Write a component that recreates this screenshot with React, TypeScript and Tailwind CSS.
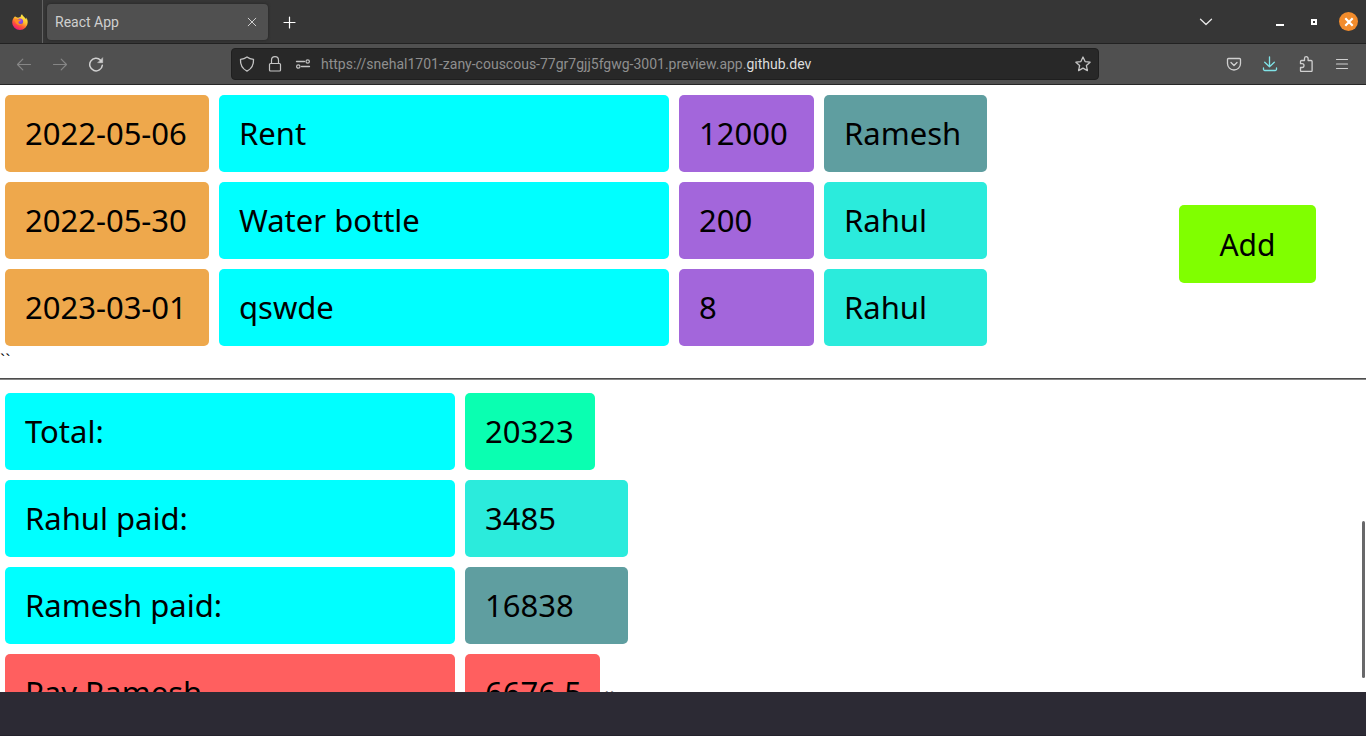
import type { ReactNode } from "react";

type Expense = { date: string; item: string; amount: string; payer: "Ramesh" | "Rahul" };

const expenses: Expense[] = [
  { date: "2022-05-06", item: "Rent", amount: "12000", payer: "Ramesh" },
  { date: "2022-05-30", item: "Water bottle", amount: "200", payer: "Rahul" },
  { date: "2023-03-01", item: "qswde", amount: "8", payer: "Rahul" },
];

const payerColor = { Ramesh: "bg-[#5f9ea0]", Rahul: "bg-[#2bebdc]" };

const summary = [
  { label: "Total:", value: "20323", labelStyle: "bg-[#00ffff]", valueStyle: "w-[130px] bg-[#0affb1]", note: "" },
  { label: "Rahul paid:", value: "3485", labelStyle: "bg-[#00ffff]", valueStyle: "w-[163px] bg-[#2bebdc]", note: "" },
  { label: "Ramesh paid:", value: "16838", labelStyle: "bg-[#00ffff]", valueStyle: "w-[163px] bg-[#5f9ea0]", note: "" },
  { label: "Pay Ramesh", value: "6676.5", labelStyle: "bg-[#ff5f5f]", valueStyle: "w-[135px] bg-[#ff5f5f]", note: "``" },
];

function Icon({ children, className = "" }: { children: ReactNode; className?: string }) {
  return (
    <svg
      viewBox="0 0 16 16"
      className={`size-4 shrink-0 ${className}`}
      fill="none"
      stroke="currentColor"
      strokeWidth="1.2"
      strokeLinecap="round"
      strokeLinejoin="round"
      aria-hidden="true"
    >
      {children}
    </svg>
  );
}

function ToolButton({ label, className = "text-[#d0d0d0]", children }: { label: string; className?: string; children: ReactNode }) {
  return (
    <button type="button" aria-label={label} className={`flex h-8 w-9 shrink-0 items-center justify-center ${className}`}>
      <Icon>{children}</Icon>
    </button>
  );
}

function FirefoxLogo() {
  return (
    <svg viewBox="0 0 16 16" className="size-4" aria-hidden="true">
      <defs>
        <linearGradient id="flame" x1="0.85" y1="0.05" x2="0.3" y2="1">
          <stop offset="0" stopColor="#fff44f" />
          <stop offset="0.4" stopColor="#ffc02e" />
          <stop offset="0.68" stopColor="#ff5a34" />
          <stop offset="1" stopColor="#f0127c" />
        </linearGradient>
        <radialGradient id="globe" cx="0.5" cy="0.3" r="0.8">
          <stop offset="0" stopColor="#b14ef0" />
          <stop offset="1" stopColor="#5046d8" />
        </radialGradient>
      </defs>
      <path
        d="M10 0.2c-.9.7-1.4 1.7-1.4 2.8-1 .1-1.8.3-2.5.8C5.1 3.5 4 3.2 3.300 2.5 2.9 2.2 2.6 2.5 2.3 3 1 4.5.2 6.5.2 8.400a7.700 7.500 0 0 0 15.500.1c0-1.800-.5-3.500-1.500-4.900.1.700.1 1.300 0 1.800C13.500 3.500 10.800 2.500 10 .2Z"
        fill="url(#flame)"
      />
      <circle cx="8" cy="7.6" r="3.1" fill="url(#globe)" />
      <path d="M2.600 5.300C4 4.500 5.800 4.700 7 5.800l1.800.3c-.2.900-1.500 1.200-2.200 1.700-.4.900.2 2.100 1.700 2.100 1 0 1.600-.5 2.400-.4-.6 1.200-2 1.900-3.500 1.700-2.500-.3-4.200-2.200-4.600-5.900Z" fill="#ff8b24" />
    </svg>
  );
}

function BrowserTabs() {
  return (
    <header className="flex h-11 shrink-0 items-center border-b border-[#222222] bg-[#363636] text-[#e8e8e8]">
      <div className="flex h-full w-[43px] items-center justify-center border-r border-[#626262] pr-[2px]">
        <FirefoxLogo />
      </div>
      <div className="ml-1 flex h-9 w-[221px] items-center justify-between rounded bg-[#505050] pl-2 text-[#cfcfcf] shadow-[0_0_3px_#222222]">
        <span className="text-sm">React App</span>
        <button type="button" aria-label="Close tab" className="flex size-8 items-center justify-center">
          <Icon><path d="M4.200 4.200l7.600 7.600M11.800 4.200l-7.600 7.600" strokeWidth="1" /></Icon>
        </button>
      </div>
      <button type="button" aria-label="New tab" className="ml-1 flex size-9 items-center justify-center text-white">
        <Icon><path d="M7.500 3v11M2 8.500h11" strokeWidth="1.200" /></Icon>
      </button>
      <div className="ml-auto flex items-center pr-2">
        <button type="button" aria-label="List all tabs" className="mr-[50px] flex size-8 items-center justify-center">
          <Icon><path d="M2.500 5.300L8 10.500l5.500-5.200" strokeWidth="1.300" /></Icon>
        </button>
        <button type="button" aria-label="Minimize" className="flex h-8 w-4 items-center justify-center text-white">
          <Icon><path d="M4 10h8v2H4z" fill="currentColor" stroke="none" /></Icon>
        </button>
        <button type="button" aria-label="Maximize" className="ml-[18px] flex h-8 w-4 items-center justify-center text-white">
          <Icon><path d="M6 6h4v4H6z" strokeWidth="2" strokeLinejoin="miter" /></Icon>
        </button>
        <button type="button" aria-label="Close window" className="ml-[17px] flex size-[19px] items-center justify-center rounded-full bg-[#f28c2c] text-white">
          <Icon><path d="M4.300 4.300l7.400 7.400M11.700 4.300l-7.400 7.400" strokeWidth="2.200" strokeLinecap="butt" /></Icon>
        </button>
      </div>
    </header>
  );
}

function BrowserToolbar() {
  return (
    <nav aria-label="Navigation" className="flex h-[41px] shrink-0 items-center border-b border-[#262626] bg-[#505050] px-[6px]">
      <ToolButton label="Back" className="text-[#868686]"><path d="M14.500 8.500H1.500M6.800 3.200L1.500 8.500l5.300 5.300" /></ToolButton>
      <ToolButton label="Forward" className="text-[#868686]"><path d="M1.500 8.500h13M9.200 3.200l5.300 5.300-5.300 5.300" /></ToolButton>
      <ToolButton label="Reload">
        <path d="M14.300 9.300A6.300 6.300 0 1 1 12.600 4.200" strokeWidth="1.500" />
        <path d="M14.700 2v4.700H10z" fill="currentColor" strokeWidth="0.500" />
      </ToolButton>
      <div className="mx-[117px] flex h-8 min-w-0 flex-1 items-center rounded border border-[#1f1f1f] bg-[#282828] px-[7px] text-[#c4c4c4]">
        <Icon><path d="M8 .9c2 1.500 4 2.200 6.500 2.500.3 5-1.800 9.400-6.500 11.800C3.300 12.800 1.200 8.400 1.500 3.400 4 3.100 6 2.400 8 .9Z" strokeWidth="1.300" /></Icon>
        <Icon className="ml-3"><path d="M3.500 7.500h9a1 1 0 0 1 1 1v5.500a1 1 0 0 1-1 1h-9a1 1 0 0 1-1-1V8.500a1 1 0 0 1 1-1ZM4.500 7.500V4.200a3.500 3.500 0 0 1 7 0v3.300" strokeWidth="1.200" /></Icon>
        <Icon className="ml-3">
          <path d="M1.500 5.500h8M6.500 10.500h8" strokeWidth="1.300" />
          <circle cx="12.700" cy="5.500" r="1.700" />
          <circle cx="3.300" cy="10.500" r="1.700" />
        </Icon>
        <div className="relative ml-[10px] h-5 min-w-0 flex-1 overflow-hidden text-sm">
          <input
            aria-label="Address"
            readOnly
            defaultValue="https://snehal1701-zany-couscous-77gr7gjj5fgwg-3001.preview.app.github.dev"
            className="absolute inset-0 w-full bg-transparent text-transparent outline-none"
          />
          <span aria-hidden="true" className="pointer-events-none whitespace-nowrap text-[#8f8f8f]">
            https://snehal1701-zany-couscous-77gr7gjj5fgwg-3001.preview.app.<span className="text-[#dcdcdc]">github.dev</span>
          </span>
        </div>
        <button type="button" aria-label="Bookmark this page" className="flex">
          <Icon><path d="M8 1l2.100 4.600 5 .6-3.700 3.400 1 5L8 12.100l-4.400 2.500 1-5L.9 6.200l5-.6Z" strokeWidth="1.300" /></Icon>
        </button>
      </div>
      <ToolButton label="Save to Pocket">
        <path d="M2.500 2.500h11a1 1 0 0 1 1 1V7.500a6.500 6.500 0 0 1-13 0V3.500a1 1 0 0 1 1-1ZM5 6.500l3 3 3-3" strokeWidth="1.300" />
      </ToolButton>
      <ToolButton label="Downloads" className="text-[#80e4e8]">
        <path d="M7.500 .8v10M2.700 6.200l4.800 4.600 4.800-4.600M1.500 12v1.200a1.300 1.300 0 0 0 1.300 1.300h10.400a1.300 1.300 0 0 0 1.300-1.300V12" strokeWidth="1.300" />
      </ToolButton>
      <ToolButton label="Extensions">
        <path d="M2.500 7.500V5.500a1 1 0 0 1 1-1h3V2.500a1.800 1.800 0 0 1 3.600 0v2h3a1 1 0 0 1 1 1v9a1 1 0 0 1-1 1H3.500a1 1 0 0 1-1-1v-3h1.600a1.900 1.900 0 0 0 0-3.800H2.500Z" strokeWidth="1.300" />
      </ToolButton>
      <ToolButton label="Menu"><path d="M2.500 3.500h11M2.500 8h11M2.500 12.500h11" strokeWidth="1.200" /></ToolButton>
    </nav>
  );
}

function Card({ className, children }: { className: string; children: ReactNode }) {
  return <div className={`h-[77px] rounded-[5px] px-5 text-[31px] leading-[77px] whitespace-nowrap ${className}`}>{children}</div>;
}

export default function App() {
  return (
    <div className="flex h-screen flex-col overflow-hidden bg-[#2c2a34] font-['Roboto',sans-serif]">
      <BrowserTabs />
      <BrowserToolbar />
      <main className="relative min-h-0 flex-1 overflow-hidden bg-white pt-[5px] font-['Noto_Sans',sans-serif] text-black">
        <div className="flex items-start justify-between">
          <table aria-label="Expenses" className="border-separate border-spacing-0">
            <tbody>
              {expenses.map((e) => (
                <tr key={e.date}>
                  <td className="p-[5px]"><Card className="w-[204px] bg-[#eea84c]">{e.date}</Card></td>
                  <td className="p-[5px]"><Card className="w-[450px] bg-[#00ffff]">{e.item}</Card></td>
                  <td className="p-[5px]"><Card className="w-[135px] bg-[#a366db]">{e.amount}</Card></td>
                  <td className="p-[5px]"><Card className={`w-[163px] ${payerColor[e.payer]}`}>{e.payer}</Card></td>
                </tr>
              ))}
            </tbody>
          </table>
          <button type="button" className="mt-[115px] mr-[50px] h-[78px] w-[137px] rounded-[5px] bg-[#80ff00] text-[30px]">
            Add
          </button>
        </div>
        <p className="font-['Liberation_Sans',sans-serif] text-base leading-[19px]">``</p>
        <hr className="my-2 border-t border-b border-t-[#4d4d4d] border-b-[#858585]" />
        <table aria-label="Summary" className="border-separate border-spacing-0">
          <tbody>
            {summary.map((s) => (
              <tr key={s.label}>
                <th scope="row" className="p-[5px] text-left font-normal">
                  <Card className={`w-[450px] ${s.labelStyle}`}>{s.label}</Card>
                </th>
                <td className="p-[5px]">
                  <div className="flex items-baseline gap-[5px]">
                    <Card className={s.valueStyle}>{s.value}</Card>
                    {s.note && <span className="font-['Liberation_Sans',sans-serif] text-base">{s.note}</span>}
                  </div>
                </td>
              </tr>
            ))}
          </tbody>
        </table>
        <div aria-hidden="true" className="absolute right-px bottom-[14px] h-[157px] w-[3px] rounded-full bg-[#68686a]" />
      </main>
      <footer className="h-11 shrink-0 border-b border-[#24222c] bg-[#2c2a34]" />
    </div>
  );
}
